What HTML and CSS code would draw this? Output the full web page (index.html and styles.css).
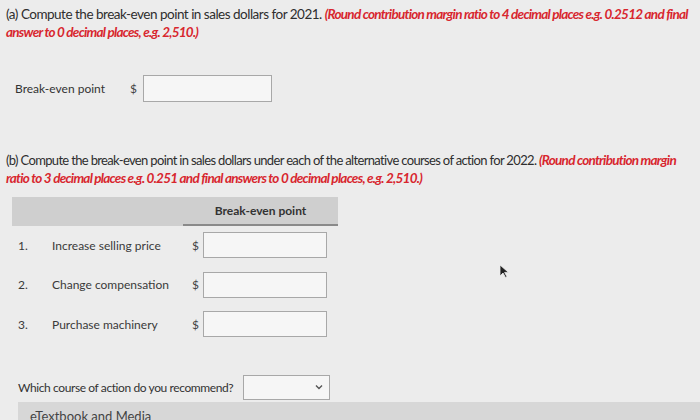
FILE: index.html
```html
<!DOCTYPE html>
<html>
<head>
<meta charset="utf-8">
<link rel="stylesheet" href="styles.css">
</head>
<body>
<div class="page">
  <p class="q">(a) Compute the break-even point in sales dollars for 2021. <em class="hint">(Round contribution margin ratio to 4 decimal places e.g. 0.2512 and final answer to 0 decimal places, e.g. 2,510.)</em></p>
  <div class="single">
    <span class="label">Break-even point</span>
    <span class="dollar">$</span>
    <span class="box wide"></span>
  </div>
  <p class="q qb">(b) Compute the break-even point in sales dollars under each of the alternative courses of action for 2022. <em class="hint">(Round contribution margin ratio to 3 decimal places e.g. 0.251 and final answers to 0 decimal places, e.g. 2,510.)</em></p>
  <div class="table">
    <div class="thead">
      <div class="thspace"></div>
      <div class="th">Break-even point</div>
    </div>
    <div class="row first">
      <span class="num">1.</span>
      <span class="name">Increase selling price</span>
      <span class="dollar">$</span>
      <span class="box cell"></span>
    </div>
    <div class="row">
      <span class="num">2.</span>
      <span class="name">Change compensation</span>
      <span class="dollar">$</span>
      <span class="box cell"></span>
    </div>
    <div class="row">
      <span class="num">3.</span>
      <span class="name">Purchase machinery</span>
      <span class="dollar">$</span>
      <span class="box cell"></span>
    </div>
  </div>
  <div class="recommend">
    <span class="label">Which course of action do you recommend?</span>
    <span class="box select"><svg width="8" height="6" viewBox="0 0 8 6"><path d="M1 1.5 L4 4.5 L7 1.5" fill="none" stroke="#555" stroke-width="1.4"/></svg></span>
  </div>
  <div class="etext">eTextbook and Media</div>
</div>
<svg class="cursor" width="10" height="14" viewBox="0 0 10 14"><path d="M1 1 L1 12 L4 9 L6.5 13.5 L8 12.8 L5.6 8.4 L9.5 8.4 Z" fill="#222" stroke="#eee" stroke-width="0.8"/></svg>
</body>
</html>
```
FILE: styles.css
```css
html, body {
  margin: 0;
  padding: 0;
}
body {
  background: #ececec;
  font-family: Lato, "Open Sans", sans-serif;
  color: #3a3a3a;
  width: 700px;
  height: 420px;
  overflow: hidden;
  position: relative;
}
.page {
  padding: 5px 0 0 6px;
}
.q {
  margin: 0;
  font-size: 13.5px;
  line-height: 18px;
  letter-spacing: -0.5px;
  width: 694px;
  color: #2e2e2e;
}
.hint {
  color: #d8262e;
  font-weight: 700;
  font-style: italic;
  font-size: 13.5px;
  letter-spacing: -0.75px;
}
.single {
  display: flex;
  align-items: center;
  margin: 33px 0 0 9px;
  height: 28px;
}
.label {
  font-size: 12px;
  color: #333;
  white-space: nowrap;
}
.single .label {
  width: 115px;
}
.dollar {
  font-size: 12px;
  color: #444;
  width: 13px;
}
.box {
  display: block;
  background: #f6f6f6;
  border: 1px solid #a8a8a8;
  box-sizing: border-box;
}
.wide {
  width: 129px;
  height: 27px;
}
.qb {
  margin-top: 49px;
  font-size: 13px;
  letter-spacing: -0.66px;
}
.table {
  margin: 10px 0 0 6px;
  width: 326px;
}
.thead {
  display: flex;
  background: #cfcfcf;
  height: 29px;
}
.thspace {
  width: 171px;
}
.th {
  flex: 1;
  display: flex;
  align-items: center;
  justify-content: center;
  font-size: 12px;
  font-weight: 700;
  color: #333;
  border-bottom: 2px solid #8a8a8a;
}
.row {
  display: flex;
  align-items: center;
  height: 26px;
  margin-top: 13.5px;
  font-size: 12px;
}
.row.first {
  margin-top: 6px;
}
.num {
  width: 40px;
  padding-left: 6px;
  box-sizing: border-box;
}
.name {
  width: 140px;
}
.row .dollar {
  width: 11px;
}
.cell {
  width: 124px;
  height: 26px;
}
.recommend {
  display: flex;
  align-items: center;
  margin: 37px 0 0 12px;
  height: 26px;
}
.recommend .label {
  width: 225px;
  letter-spacing: -0.4px;
}
.select {
  width: 87px;
  height: 25px;
  display: flex;
  align-items: center;
  justify-content: flex-end;
  padding-right: 6px;
}
.etext {
  margin: 2px 0 0 12px;
  background: #d7d7d7;
  height: 20px;
  padding: 6px 0 0 12px;
  box-sizing: border-box;
  font-size: 13px;
  line-height: 16px;
  color: #444;
}
.cursor {
  position: absolute;
  left: 499px;
  top: 264px;
}
```
